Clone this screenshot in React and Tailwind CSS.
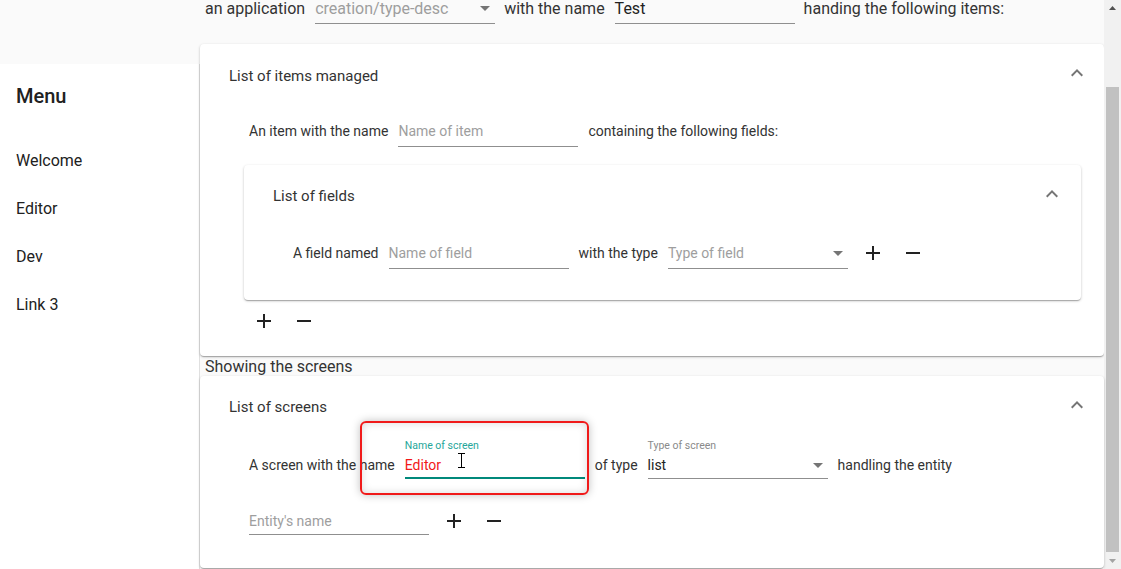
import React from 'react';

const font = { fontFamily: 'Roboto, "Noto Sans", sans-serif' };

function ChevronUp() {
  return (
    <svg width="24" height="24" viewBox="0 0 24 24" className="text-[#757575]">
      <path fill="currentColor" d="M7.41 15.41L12 10.83l4.59 4.58L18 14l-6-6-6 6z" />
    </svg>
  );
}

function Plus() {
  return (
    <svg width="24" height="24" viewBox="0 0 24 24" className="text-[#222]">
      <path fill="currentColor" d="M19 13h-6v6h-2v-6H5v-2h6V5h2v6h6v2z" />
    </svg>
  );
}

function Minus() {
  return (
    <svg width="24" height="24" viewBox="0 0 24 24" className="text-[#222]">
      <path fill="currentColor" d="M19 13H5v-2h14v2z" />
    </svg>
  );
}

function Arrow() {
  return (
    <svg width="10" height="5" viewBox="0 0 10 5" className="absolute right-[5px] top-[6px]">
      <path fill="#757575" d="M0 0h10L5 5z" />
    </svg>
  );
}

// simple underline field, text line is 17px tall
function Field({ value, placeholder, select, size = 'sm', w = 'w-[180px]', pb = 'pb-[6px]' }) {
  const txt = size === 'lg' ? 'text-[16px]' : 'text-[14px]';
  return (
    <div className={`relative ${w} border-b border-[#8f8f8f] ${pb}`}>
      <div className={`${txt} leading-[17px] h-[17px] ${value ? 'text-[#222]' : 'text-[#9e9e9e]'}`}>
        {value || placeholder}
      </div>
      {select && <Arrow />}
    </div>
  );
}

function AddRemove({ className = '' }) {
  return (
    <div className={`flex items-center gap-[16px] ${className}`}>
      <Plus />
      <Minus />
    </div>
  );
}

export default function App() {
  return (
    <div style={font} className="flex h-[569px] w-[1121px] overflow-hidden bg-[#fafafa] text-[#333]">
      {/* sidebar */}
      <div className="flex w-[200px] shrink-0 flex-col">
        <div className="h-[64px]" />
        <div className="flex-1 bg-white border-r border-[#e0e0e0] pl-[16px]">
          <div className="mt-[20px] h-[24px] text-[20px] font-medium leading-[24px] text-[#212121]">Menu</div>
          <div className="mt-[29px] flex flex-col text-[16px] text-[#212121]">
            <div className="h-[48px] leading-[48px]">Welcome</div>
            <div className="h-[48px] leading-[48px]">Editor</div>
            <div className="h-[48px] leading-[48px]">Dev</div>
            <div className="h-[48px] leading-[48px]">Link 3</div>
          </div>
        </div>
      </div>

      {/* content */}
      <div className="w-[904px] shrink-0">
        <div className="flex h-[44px] items-start gap-[10px] pl-[5px] text-[16px]">
          <div className="leading-[17px]">an application</div>
          <Field size="lg" placeholder="creation/type-desc" select />
          <div className="leading-[17px] -ml-[1px]">with the name</div>
          <Field size="lg" value="Test" />
          <div className="leading-[17px] -ml-[1px]">handing the following items:</div>
        </div>

        {/* items panel */}
        <div className="h-[312px] rounded-[4px] bg-white shadow-[0_1px_3px_rgba(0,0,0,0.2),0_1px_1px_rgba(0,0,0,0.14),0_2px_1px_-1px_rgba(0,0,0,0.12)]">
          <div className="flex h-[64px] items-center justify-between pl-[29px] pr-[15px]">
            <div className="text-[15px] text-[#333]">List of items managed</div>
            <div className="-mt-[6px]"><ChevronUp /></div>
          </div>
          <div className="flex items-start gap-[10px] pl-[49px] pt-[15px] text-[14px]">
            <div className="leading-[17px]">An item with the name</div>
            <Field placeholder="Name of item" />
            <div className="leading-[17px]">containing the following fields:</div>
          </div>

          <div className="ml-[44px] mr-[23px] mt-[18px] h-[135px] rounded-[4px] bg-white shadow-[0_1px_3px_rgba(0,0,0,0.2),0_1px_1px_rgba(0,0,0,0.14),0_2px_1px_-1px_rgba(0,0,0,0.12)]">
            <div className="flex h-[62px] items-center justify-between pl-[29px] pr-[17px]">
              <div className="text-[15px] text-[#333]">List of fields</div>
              <div className="-mt-[4px]"><ChevronUp /></div>
            </div>
            <div className="flex items-start gap-[10px] pl-[49px] pt-[18px] text-[14px]">
              <div className="leading-[17px]">A field named</div>
              <Field placeholder="Name of field" />
              <div className="leading-[17px]">with the type</div>
              <Field placeholder="Type of field" select />
              <AddRemove className="-mt-[4px] ml-[3px]" />
            </div>
          </div>

          <AddRemove className="ml-[52px] mt-[9px]" />
        </div>

        <div className="h-[20px] pl-[5px] pt-[1px] text-[16px] leading-[19px] text-[#333]">Showing the screens</div>

        {/* screens panel */}
        <div className="relative h-[192px] rounded-[4px] bg-white shadow-[0_1px_3px_rgba(0,0,0,0.2),0_1px_1px_rgba(0,0,0,0.14),0_2px_1px_-1px_rgba(0,0,0,0.12)]">
          <div className="flex h-[62px] items-center justify-between pl-[29px] pr-[15px]">
            <div className="text-[15px] text-[#333]">List of screens</div>
            <div className="-mt-[4px]"><ChevronUp /></div>
          </div>
          <div className="flex items-end gap-[10px] pl-[49px] pt-[1px] text-[14px]">
            <div className="pb-[5px] leading-[17px]">A screen with the name</div>
            <div className="w-[180px]">
              <div className="text-[10.5px] leading-[13px] text-[#26a69a]">Name of screen</div>
              <div className="mt-[5px] h-[17px] text-[14px] leading-[17px] text-[#f21818]">Editor</div>
              <div className="mt-[3px] h-[2px] bg-[#00897b]" />
            </div>
            <div className="pb-[5px] leading-[17px]">of type</div>
            <div className="relative w-[180px]">
              <div className="text-[10.5px] leading-[13px] text-[#8a8a8a]">Type of screen</div>
              <div className="mt-[5px] h-[17px] text-[14px] leading-[17px] text-[#222]">list</div>
              <div className="mt-[4px] h-[1px] bg-[#8f8f8f]" />
              <svg width="10" height="5" viewBox="0 0 10 5" className="absolute right-[5px] top-[24px]">
                <path fill="#757575" d="M0 0h10L5 5z" />
              </svg>
            </div>
            <div className="pb-[5px] leading-[17px]">handling the entity</div>
          </div>
          <div className="flex items-start gap-[13px] pl-[49px] pt-[34px] text-[14px]">
            <Field placeholder="Entity's name" pb="pb-[4px]" />
            <AddRemove className="-mt-[4px]" />
          </div>

          {/* annotation highlight */}
          <div className="pointer-events-none absolute left-[160px] top-[45px] h-[74px] w-[229px] rounded-[6px] border-2 border-[#f01a1a] shadow-[0_0_8px_rgba(0,0,0,0.25),inset_0_0_8px_rgba(0,0,0,0.15)]" />
          {/* text cursor */}
          <svg width="9" height="15" viewBox="0 0 9 15" className="absolute left-[257px] top-[77px]">
            <path d="M1 0.5h7M4.5 0.5v14M1 14.5h7" stroke="#000" strokeWidth="1" fill="none" />
          </svg>
        </div>
      </div>

      {/* scrollbar */}
      <div className="ml-auto flex w-[17px] shrink-0 flex-col bg-[#f1f1f1]">
        <div className="flex h-[17px] items-center justify-center">
          <svg width="7" height="4" viewBox="0 0 7 4"><path fill="#505050" d="M0 4h7L3.5 0z" /></svg>
        </div>
        <div className="mx-[2px] mt-[70px] h-[466px] bg-[#c1c1c1]" />
        <div className="mt-auto flex h-[17px] items-center justify-center">
          <svg width="7" height="4" viewBox="0 0 7 4"><path fill="#a3a3a3" d="M0 0h7L3.5 4z" /></svg>
        </div>
      </div>
    </div>
  );
}
